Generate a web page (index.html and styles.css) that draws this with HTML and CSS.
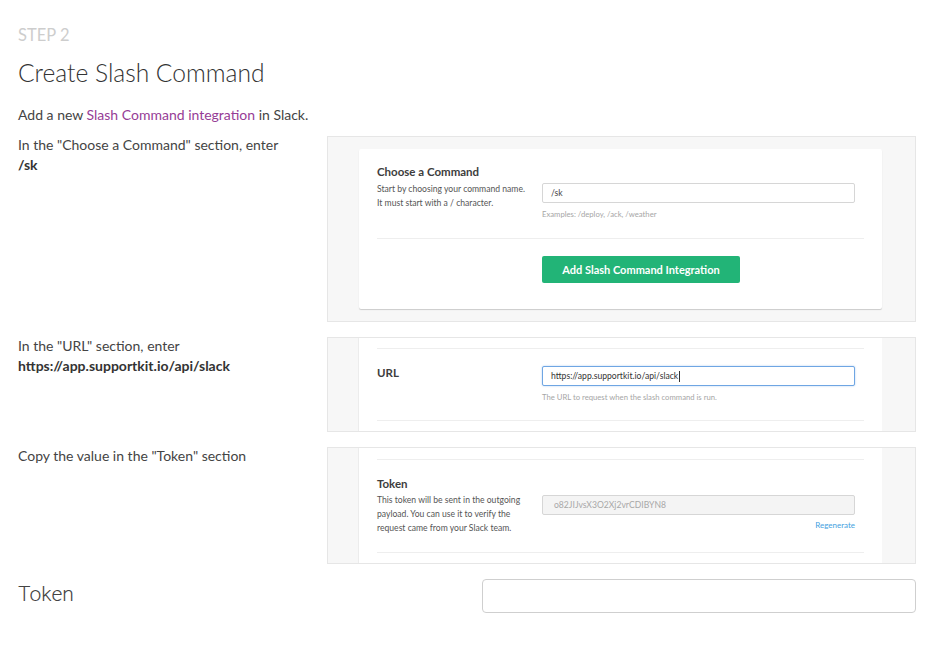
FILE: index.html
```html
<!DOCTYPE html>
<html>
<head>
<meta charset="utf-8">
<link rel="stylesheet" href="styles.css">
</head>
<body>
<div class="page">
  <div class="step">Step 2</div>
  <h1 class="title">Create Slash Command</h1>
  <p class="intro">Add a new <a class="link" href="#">Slash Command integration</a> in Slack.</p>

  <div class="rows">
    <div class="instr">In the "Choose a Command" section, enter<br><strong>/sk</strong></div>
    <div class="shot shot-card">
      <div class="card">
        <div class="field">
          <div class="field-label">
            <div class="flabel">Choose a Command</div>
            <div class="fdesc">Start by choosing your command name.<br>It must start with a / character.</div>
          </div>
          <div class="field-input">
            <div class="sinput">/sk</div>
            <div class="fhelp">Examples: /deploy, /ack, /weather</div>
          </div>
        </div>
        <div class="btn-row"><span class="sbtn">Add Slash Command Integration</span></div>
      </div>
    </div>

    <div class="instr">In the "URL" section, enter<br><strong>https://app.supportkit.io/api/slack</strong></div>
    <div class="shot shot-panel">
      <div class="panel">
        <div class="field field-ruled field-url">
          <div class="field-label">
            <div class="flabel">URL</div>
          </div>
          <div class="field-input">
            <div class="sinput sinput-focus">https://app.supportkit.io/api/slack<span class="caret"></span></div>
            <div class="fhelp">The URL to request when the slash command is run.</div>
          </div>
        </div>
      </div>
    </div>

    <div class="instr">Copy the value in the "Token" section</div>
    <div class="shot shot-panel">
      <div class="panel panel-token">
        <div class="field field-ruled">
          <div class="field-label">
            <div class="flabel">Token</div>
            <div class="fdesc">This token will be sent in the outgoing<br>payload. You can use it to verify the<br>request came from your Slack team.</div>
          </div>
          <div class="field-input">
            <div class="sinput sinput-disabled">o82JIJvsX3O2Xj2vrCDIBYN8</div>
            <div class="regen">Regenerate</div>
          </div>
        </div>
      </div>
    </div>
  </div>

  <div class="form-row">
    <label class="form-label" for="token">Token</label>
    <input class="form-input" id="token" type="text">
  </div>
</div>
</body>
</html>
```

FILE: styles.css
```css
* { box-sizing: border-box; }
html, body { margin: 0; padding: 0; background: #fff; }
body {
  font-family: Lato, "Open Sans", sans-serif;
  color: #444;
  height: 650px;
  overflow: hidden;
}
.page {
  padding: 25px 20px 0 18px;
}
.step {
  font-size: 16.5px;
  line-height: 20px;
  font-weight: 400;
  color: #cdcdcd;
  text-transform: uppercase;
}
.title {
  margin: 13px 0 0;
  font-size: 24.6px;
  line-height: 30px;
  font-weight: 300;
  color: #333;
}
.intro {
  margin: 17px 0 0;
  font-size: 14px;
  line-height: 20px;
  color: #444;
}
.link { color: #963c96; text-decoration: none; }

.rows {
  margin-top: 11px;
  display: grid;
  grid-template-columns: 309px 1fr;
  row-gap: 15px;
}
.instr {
  font-size: 14px;
  line-height: 20px;
  color: #444;
  margin-top: -1px;
}
.instr strong { font-weight: 700; color: #333; }

.shot {
  border: 1px solid #e6e6e6;
  background: #f7f7f7;
}
.shot-card { padding: 12px 33px 12px 31px; }
.shot-panel { padding: 0 33px 0 30px; }

.card {
  background: #fff;
  height: 160px;
  padding: 0 18px;
  box-shadow: 0 1px 1px rgba(0,0,0,0.18);
  border-radius: 2px;
}
.panel {
  background: #fff;
  border-left: 1px solid #ececec;
  padding: 10px 18px 10px;
}
.panel-token { padding-top: 11px; }

.field {
  display: grid;
  grid-template-columns: 165px 313px;
  padding: 16px 0 18px;
  border-bottom: 1px solid #eee;
}
.field-ruled {
  border-top: 1px solid #eee;
  padding: 17px 0 17px;
}
.flabel {
  font-size: 11.5px;
  line-height: 14px;
  font-weight: 700;
  color: #3d3d3d;
}
.fdesc {
  margin-top: 3px;
  font-size: 8.6px;
  line-height: 14px;
  color: #555;
}
.panel-token .fdesc { margin-top: 2px; }
.field-input { padding-top: 18px; }
.field-url .field-input { padding-top: 0; }
.sinput {
  height: 20px;
  border: 1px solid #d6d6d6;
  border-radius: 2px;
  padding: 0 8px;
  font-size: 8.6px;
  line-height: 18px;
  color: #444;
  background: #fff;
  display: flex;
  align-items: center;
}
.sinput-focus {
  border-color: #6fa6e3;
  box-shadow: 0 0 2px rgba(70,140,220,0.45);
  color: #333;
}
.caret {
  display: inline-block;
  width: 1px;
  height: 11px;
  background: #333;
  margin-left: 1px;
}
.sinput-disabled {
  background: #f4f4f4;
  color: #a8a8a8;
  padding-left: 11px;
}
.fhelp {
  margin-top: 5px;
  font-size: 7.7px;
  line-height: 12px;
  color: #a6a6a6;
}
.regen {
  margin-top: 4px;
  font-size: 8px;
  line-height: 12px;
  color: #439fe0;
  text-align: right;
}
.btn-row {
  padding: 17px 0 0 165px;
}
.sbtn {
  display: flex;
  align-items: center;
  justify-content: center;
  width: 198px;
  height: 27px;
  background: #22b477;
  border-radius: 2px;
  color: #fff;
  font-size: 11px;
  font-weight: 700;
}

.form-row {
  margin-top: 15px;
  display: grid;
  grid-template-columns: 464px 1fr;
  align-items: start;
}
.form-label {
  font-family: Roboto, "Liberation Sans", sans-serif;
  font-weight: 300;
  font-size: 21px;
  color: #444;
  line-height: 26px;
  padding-top: 2px;
}
.form-input {
  height: 34px;
  width: 100%;
  border: 1px solid #cfcfcf;
  border-radius: 4px;
  background: #fff;
  font-size: 14px;
  padding: 0 10px;
  outline: none;
}
```
